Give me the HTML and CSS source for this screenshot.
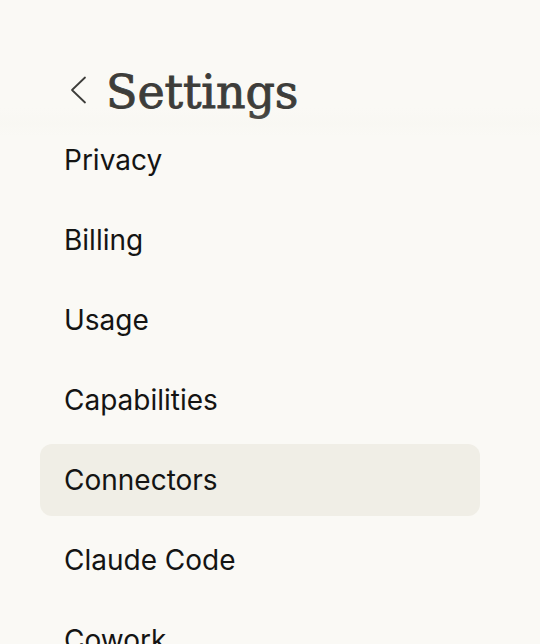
FILE: index.html
```html
<!DOCTYPE html>
<html lang="en">
<head>
  <meta charset="UTF-8">
  <title>Settings</title>
  <link rel="stylesheet" href="styles.css">
</head>
<body>

<div class="page">
  <header class="topbar">
    <button class="back" aria-label="Back">
      <svg width="20" height="28" viewBox="0 0 20 28" fill="none" stroke="currentColor" stroke-width="1.8" stroke-linecap="round" stroke-linejoin="round">
        <path d="M16 1.5 L3 14 L16 26.5"/>
      </svg>
    </button>
    <h1>Settings</h1>
  </header>

  <nav class="menu">
    <a class="item" href="#">Privacy</a>
    <a class="item" href="#">Billing</a>
    <a class="item" href="#">Usage</a>
    <a class="item" href="#">Capabilities</a>
    <a class="item active" href="#">Connectors</a>
    <a class="item" href="#">Claude Code</a>
    <a class="item" href="#">Cowork</a>
  </nav>
</div>

</body>
</html>
```

FILE: styles.css
```css
* { box-sizing: border-box; margin: 0; padding: 0; }
body { background: #faf9f5; font-family: "Inter", "Liberation Sans", sans-serif; color: #141413; overflow: hidden; height: 100vh; }

.page {
  padding: 0 60px 0 40px;
}

/* header */
.topbar {
  position: relative;
  display: flex;
  align-items: flex-end;
  gap: 17px;
  height: 124px;
  padding: 0 0 4px 29px;
  color: #3d3d3a;
}
.topbar::after {
  content: "";
  position: absolute;
  left: -40px; right: -60px;
  bottom: -12px;
  height: 28px;
  background: linear-gradient(rgba(250,249,245,0), rgba(238,236,228,0.12) 55%, rgba(250,249,245,0));
  pointer-events: none;
}
.back {
  display: flex;
  align-items: center;
  border: none;
  background: none;
  color: #3d3d3a;
  padding: 0;
  margin-bottom: 16px;
  cursor: pointer;
}
.topbar h1 {
  font-family: "DejaVu Serif", serif;
  font-weight: 400;
  font-size: 46px;
  line-height: 56px;
  letter-spacing: -0.1px;
  -webkit-text-stroke: 0.9px #3d3d3a;
}

/* menu */
.menu {
  display: flex;
  flex-direction: column;
  gap: 8px;
}
.item {
  display: flex;
  align-items: center;
  height: 72px;
  padding: 0 24px;
  border-radius: 12px;
  font-size: 28px;
  color: #141413;
  text-decoration: none;
}
.item.active { background: #f0eee6; }
```
